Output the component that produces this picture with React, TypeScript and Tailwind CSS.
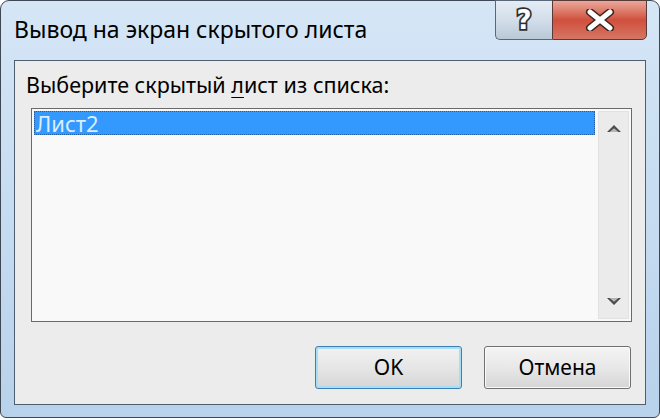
const ArrowUp = () => (
  <svg width="16" height="9" viewBox="0 0 16 9">
    <path d="M1 8 L8 1 L15 8 L12 8 L8 4.5 L4 8 Z" fill="#4d4d4d" />
    <path d="M4 8 L8 4.5 L12 8 Z" fill="#b5b5b5" />
  </svg>
);

const ArrowDown = () => (
  <svg width="16" height="9" viewBox="0 0 16 9">
    <path d="M1 1 L8 8 L15 1 L12 1 L8 4.5 L4 1 Z" fill="#4d4d4d" />
    <path d="M4 1 L8 4.5 L12 1 Z" fill="#b5b5b5" />
  </svg>
);

// close glyph: white cross with a dark rim, like the Windows 7 caption button
const CloseGlyph = () => (
  <svg width="30" height="22" viewBox="0 0 30 22">
    <path d="M5 3 L25 19 M25 3 L5 19" stroke="#3b2320" strokeWidth="8" strokeLinecap="round" />
    <path d="M5 3 L25 19 M25 3 L5 19" stroke="#ffffff" strokeWidth="5" strokeLinecap="round" />
  </svg>
);

const App = () => {
  return (
    <div className="h-[420px] w-[660px] bg-white font-['Noto_Sans',sans-serif]">
      <div className="flex h-[418px] w-[660px] flex-col rounded-t-[9px] rounded-b-[6px] border border-[#3d4854] bg-gradient-to-b from-[#d5e6f6] via-[#c6dcf1] to-[#b8d2eb] px-[13px] pb-[12px]">
        {/* title bar */}
        <div className="flex h-[59px] items-start">
          <div className="pt-[13px] text-[23px] leading-[30px] text-black">Вывод на экран скрытого листа</div>
          <div className="-mt-px ml-auto mr-[-1px] flex">
            <div className="flex h-[40px] w-[57px] items-center justify-center rounded-bl-[5px] border border-r-0 border-[#5a6778] bg-gradient-to-b from-[#e4ecf5] via-[#d3deea] to-[#b9c7d6]">
              <span className="font-['DejaVu_Sans',sans-serif] text-[26px] font-bold leading-none text-white [-webkit-text-stroke:3.5px_#2e2e2e] [paint-order:stroke_fill]">?</span>
            </div>
            <div className="flex h-[40px] w-[95px] items-center justify-center rounded-br-[5px] border border-[#5a3a36] bg-gradient-to-b from-[#e9a89c] via-[#cf4f3c] to-[#d77563]">
              <CloseGlyph />
            </div>
          </div>
        </div>

        {/* content */}
        <div className="flex flex-1 flex-col border border-[#4e5e6e] bg-[#ececec] pl-[16px] pr-[14px]">
          <div className="-ml-[5px] mt-[9px] h-[38px] text-[21.5px] leading-[30px] text-black">
            Выберите скрытый <span className="underline decoration-1 underline-offset-[4px]">л</span>ист из списка:
          </div>
          <div className="flex h-[214px] w-[601px] border border-[#6a6a6a] bg-[#f9f9f9] p-[2px]">
            <div className="flex-1">
              <div className="flex h-[24px] items-center border border-dotted border-[#1f5fa8] bg-[#3399ff] pl-[1px] text-[22px] leading-none text-[#dcedff]">
                Лист2
              </div>
            </div>
            <div className="ml-[3px] flex w-[31px] flex-col items-center justify-between border border-[#e2e2e2] bg-[#ebebeb] py-[12px]">
              <ArrowUp />
              <ArrowDown />
            </div>
          </div>
          <div className="mt-[24px] flex justify-end gap-[22px]">
            <div className="flex h-[43px] w-[147px] items-center justify-center rounded-[3px] border border-[#3c7fb1] bg-gradient-to-b from-[#f2f2f2] via-[#e6e6e6] to-[#d6d6d6] text-[21px] text-black shadow-[inset_0_0_0_2px_#a9dcf5]">
              OK
            </div>
            <div className="flex h-[43px] w-[147px] items-center justify-center rounded-[3px] border border-[#707070] bg-gradient-to-b from-[#f4f4f4] via-[#e8e8e8] to-[#d5d5d5] text-[21px] text-black shadow-[inset_0_0_0_1px_#fafafa]">
              Отмена
            </div>
          </div>
        </div>
      </div>
    </div>
  );
};

export default App;
